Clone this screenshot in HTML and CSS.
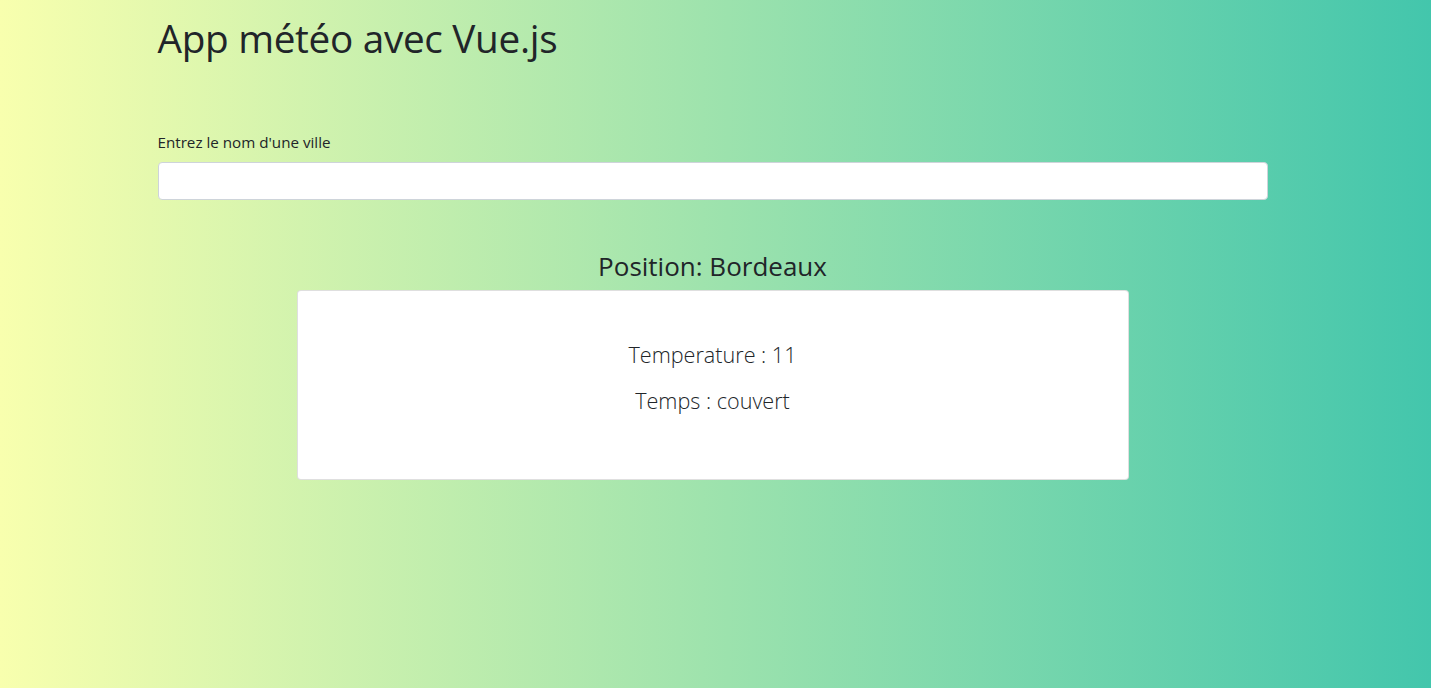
FILE: index.html
```html
<!DOCTYPE html>
<html lang="fr">
<head>
<meta charset="utf-8">
<title>App météo avec Vue.js</title>
<link rel="stylesheet" href="styles.css">
</head>
<body>
<div class="container">
  <h1 class="title">App météo avec Vue.js</h1>
  <div class="form-group">
    <label class="label" for="ville">Entrez le nom d'une ville</label>
    <input class="form-control" id="ville" type="text">
  </div>
  <div class="result">
    <h3 class="position">Position: Bordeaux</h3>
    <div class="card">
      <p class="lead">Temperature : 11</p>
      <p class="lead">Temps : couvert</p>
    </div>
  </div>
</div>
</body>
</html>
```
FILE: styles.css
```css
* { box-sizing: border-box; }
html, body { height: 100%; }
body {
  margin: 0;
  font-family: "Open Sans", "Noto Sans", sans-serif;
  color: #212529;
  background: linear-gradient(to right, #f8ffae, #43c6ac);
  min-height: 688px;
}
.container {
  width: 1110px;
  margin: 0 auto;
  padding-top: 14px;
  transform: translateX(-3px);
}
.title {
  margin: 0;
  font-size: 38.7px;
  font-weight: 400;
  line-height: 48px;
  letter-spacing: -0.3px;
}
.form-group {
  margin-top: 70px;
}
.label {
  display: block;
  font-size: 15.2px;
  line-height: 21px;
  margin-bottom: 9px;
}
.form-control {
  display: block;
  width: 100%;
  height: 38px;
  background: #fff;
  border: 1px solid #ced4da;
  border-radius: 4px;
  padding: 6px 12px;
  font-size: 16px;
}
.result {
  margin-top: 49px;
  display: flex;
  flex-direction: column;
  align-items: center;
}
.position {
  margin: 0 0 7px;
  font-size: 26px;
  font-weight: 400;
  line-height: 34px;
}
.card {
  width: 832px;
  height: 190px;
  background: #fff;
  border: 1px solid rgba(0,0,0,0.125);
  border-radius: 4px;
  padding-top: 49px;
  text-align: center;
}
.lead {
  margin: 0 0 16px;
  font-size: 21.6px;
  font-weight: 300;
  line-height: 30px;
}
```
